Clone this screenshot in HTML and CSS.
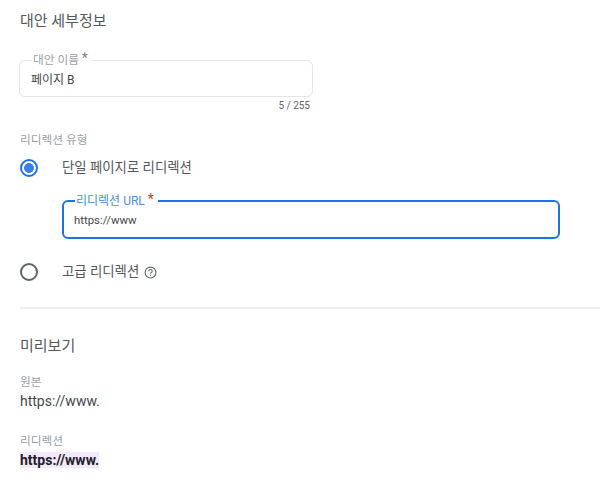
FILE: index.html
```html
<!DOCTYPE html>
<html lang="ko">
<head>
  <meta charset="UTF-8" />
  <title>대안 세부정보</title>
  <link rel="stylesheet" href="styles.css">
</head>
<body>
  <section class="details">
    <h2 class="section-title">대안 세부정보</h2>

    <fieldset class="field">
      <legend class="field-label">대안 이름 <span class="star">*</span></legend>
      <div class="field-value">페이지 B</div>
    </fieldset>
    <div class="counter">5 / 255</div>

    <div class="group-label">리디렉션 유형</div>

    <div class="radio-row first">
      <span class="radio checked"></span>
      <span class="radio-text">단일 페이지로 리디렉션</span>
    </div>

    <fieldset class="field focused">
      <legend class="field-label">리디렉션 URL <span class="star">*</span></legend>
      <div class="field-value">https://www</div>
    </fieldset>

    <div class="radio-row second">
      <span class="radio"></span>
      <span class="radio-text">고급 리디렉션</span>
      <svg class="help" viewBox="0 0 24 24" width="13" height="13">
        <circle cx="12" cy="12" r="10" fill="none" stroke="#5f6368" stroke-width="2"/>
        <path d="M8.8 9.6a3.2 3.2 0 0 1 6.4 0c0 2.2-3.2 2.4-3.2 4.9" fill="none" stroke="#5f6368" stroke-width="2"/>
        <rect x="11" y="16" width="2" height="2" fill="#5f6368"/>
      </svg>
    </div>
  </section>

  <section class="preview">
    <h2 class="section-title">미리보기</h2>
    <div class="preview-label source">원본</div>
    <div class="preview-url">https://www.</div>
    <div class="preview-label target">리디렉션</div>
    <div class="preview-url"><span class="changed">https://www.</span></div>
  </section>
</body>
</html>
```

FILE: styles.css
```css
* {
  margin: 0;
  padding: 0;
  box-sizing: border-box;
}

body {
  font-family: Roboto, "Noto Sans CJK KR", sans-serif;
  background: #fff;
  color: #44474a;
  height: 489px;
  overflow: hidden;
}

.section-title {
  font-size: 15px;
  font-weight: 400;
  line-height: 20px;
  color: #54575a;
}

.details {
  margin-left: 20px;
  padding-top: 11px;
  height: 309px;
  border-bottom: 2px solid #eeeeee;
}

.field {
  border: 1px solid #e3e5e8;
  border-radius: 6px;
  width: 294px;
  height: 44px;
  margin-top: 22px;
  margin-left: -1px;
  padding: 0 11px;
}

.field-label {
  font-size: 11.7px;
  line-height: 14px;
  color: #9aa0a6;
  padding: 0 4px 0 1px;
  margin-left: 1px;
}

.star {
  font-size: 14px;
  line-height: 10px;
  vertical-align: 1px;
  color: #80868b;
}

.field-value {
  font-size: 12px;
  line-height: 14px;
  margin-top: 6px;
}

.counter {
  width: 290px;
  font-size: 10px;
  line-height: 12px;
  text-align: right;
  color: #5f6368;
  margin-top: 3px;
}

.group-label {
  font-size: 11.7px;
  line-height: 14px;
  color: #9aa0a6;
  margin-top: 21px;
}

.radio-row {
  display: flex;
  align-items: center;
  height: 20px;
}

.radio-row.first {
  margin-top: 11px;
}

.radio-row.second {
  margin-top: 23px;
}

.radio {
  width: 18px;
  height: 18px;
  border: 2px solid #5f6368;
  border-radius: 50%;
  margin-right: 24px;
  flex-shrink: 0;
}

.radio.checked {
  border-color: #1a73e8;
  background: radial-gradient(circle, #3b82e8 0 4.6px, #fff 5.2px);
}

.radio-text {
  font-size: 13.4px;
  line-height: 20px;
  color: #54575a;
}

.help {
  margin-left: 5px;
}

.field.focused {
  border: 2px solid #1a73e8;
  width: 498px;
  height: 45px;
  margin-top: 16px;
  margin-left: 42px;
  padding: 0 10px;
}

.focused .field-label {
  font-size: 12px;
  color: #4a8fe0;
}

.focused .star {
  color: #d93025;
}

.focused .field-value {
  font-size: 11.4px;
  margin-top: 5px;
}

.preview {
  padding: 27px 0 0 20px;
}

.preview-label {
  font-size: 11.7px;
  line-height: 14px;
  color: #9aa0a6;
}

.preview-label.source {
  margin-top: 19px;
}

.preview-label.target {
  margin-top: 24px;
}

.preview-url {
  font-size: 14px;
  line-height: 18px;
  margin-top: 3px;
}

.changed {
  font-weight: 700;
  background: #f3e8fd;
  color: #202124;
}
```
